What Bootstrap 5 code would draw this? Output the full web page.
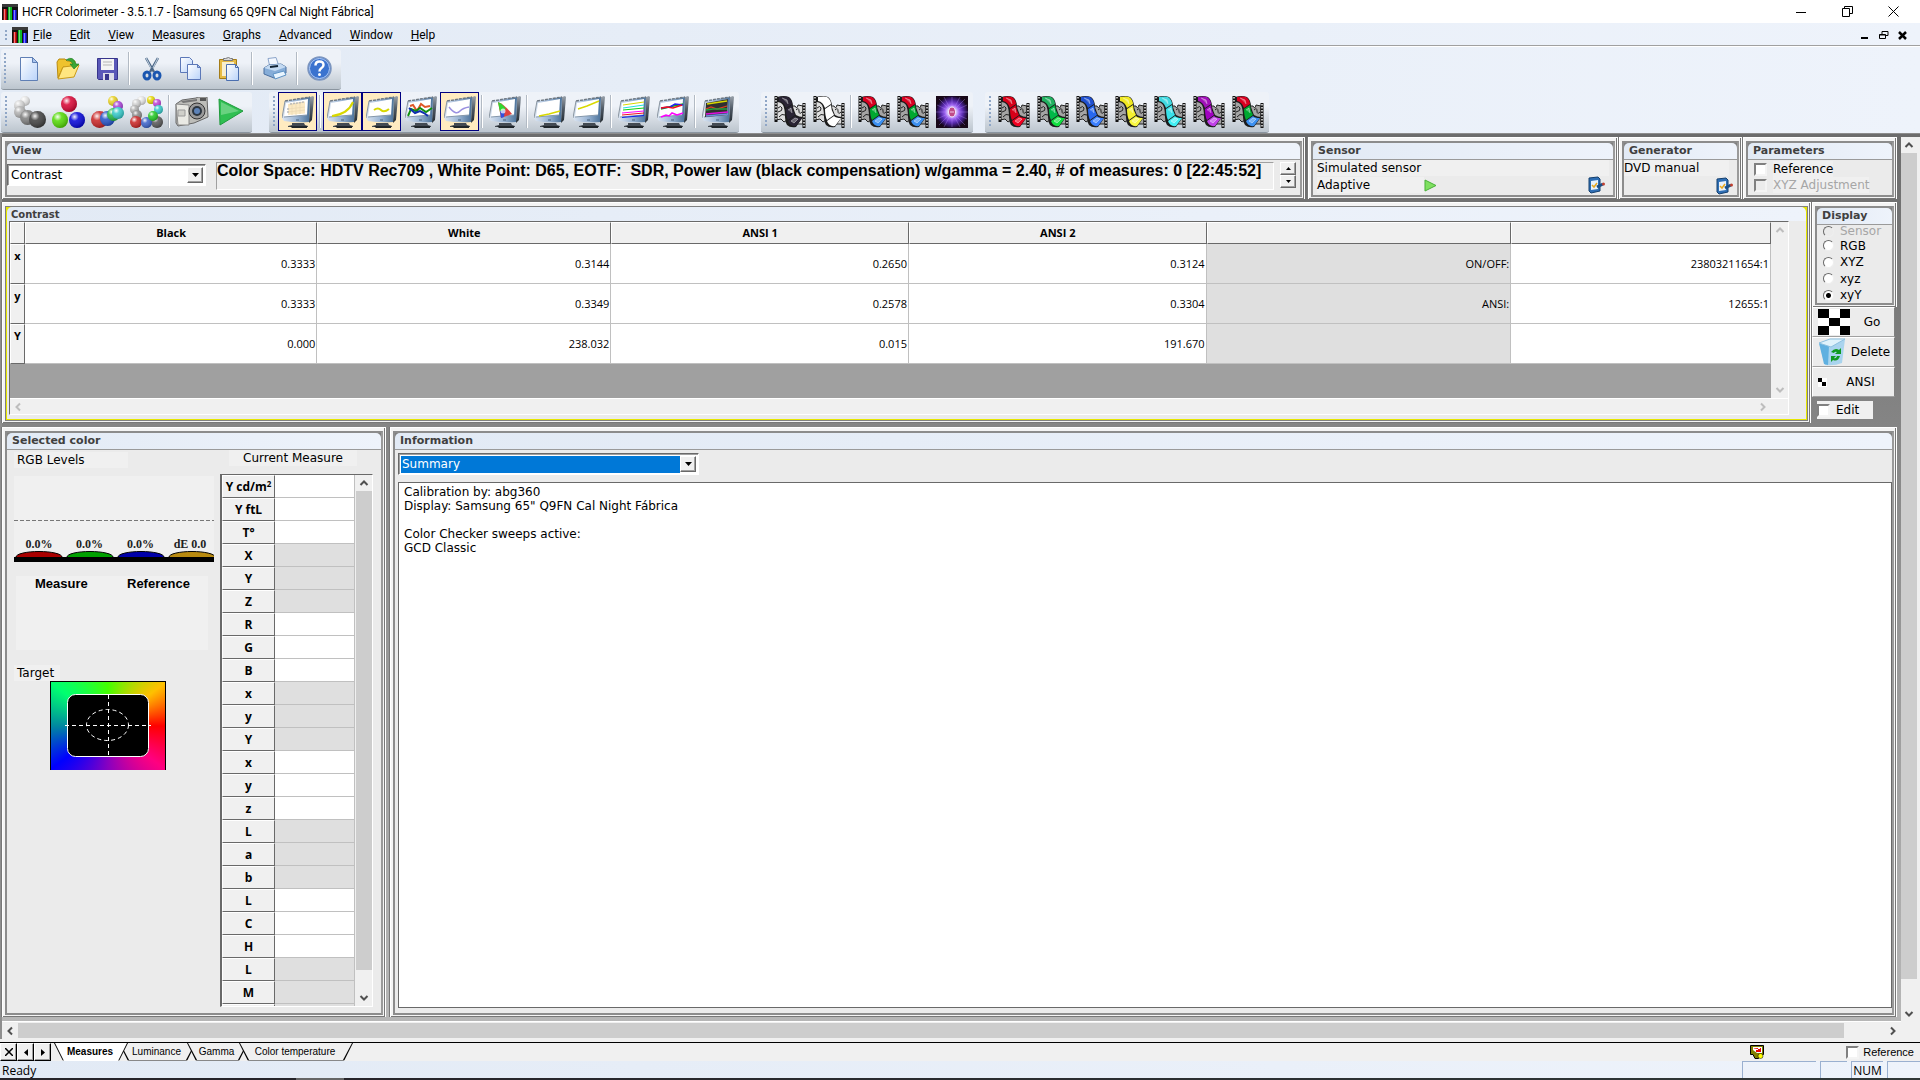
<!DOCTYPE html>
<html lang="en">
<head>
<meta charset="utf-8">
<meta name="viewport" content="width=device-width, initial-scale=1">
<title>HCFR Colorimeter</title>
<link href="https://cdn.jsdelivr.net/npm/bootstrap@5.3.0/dist/css/bootstrap.min.css" rel="stylesheet">
<style>
:root{--wide:"DejaVu Sans",sans-serif;--ui:"Open Sans","Noto Sans",sans-serif;--band:linear-gradient(90deg,#e2eaf5,#eef3fb)}
body{font-family:var(--ui);font-size:12px;line-height:16px;color:#000;overflow:hidden;background:#f0f0f0}
button,input,select{font:inherit;color:inherit;border-radius:0}
svg{display:block;flex:none}
.winbar{height:23px;background:#fff}
.winbar .caption,.menubar{font-family:Roboto,sans-serif}
.winctl{border:0;background:none;padding:0;width:46px;height:23px;display:flex;align-items:center;justify-content:center}
.menubar{height:23px;padding-top:2px;background:var(--band);border-bottom:1px solid #a0a0a0}
.menubar a{color:#000;text-decoration:none;padding:0 9px;white-space:nowrap}
.menubar a::first-letter{text-decoration:underline}
.mdictl{border:0;background:none;padding:0;width:19px;height:20px;display:flex;align-items:center;justify-content:center}
.grip{width:2px;background:repeating-linear-gradient(#8fa6c6 0 2px,transparent 2px 4px)}
.toolarea{background:var(--band);padding:2px 1px 0;border-top:1px solid #fff;border-bottom:1px solid #8c8c8c}
.toolstrip{height:41px;border-radius:3px;background:linear-gradient(#eef2f8 35%,#bcc5ce);border-bottom:1px solid #8a949e;padding:0 2px 1px 4px}
.toolstrip .grip{height:32px;margin-right:3px}
.tbtn{width:39px;height:39px;padding:0;border:1px solid transparent;background:none;display:flex;align-items:center;justify-content:center}
.tbtn.is-on{background:#ffebc0;border-color:#000080}
.tsep{width:6px;height:33px;border-left:2px solid transparent;background:linear-gradient(90deg,#b2bac4 1px,#fff 1px 2px,transparent 2px)}
.workarea{background:linear-gradient(#6c6c6c,#b8b8b8);border-left:2px solid #8f8f8f;padding-top:3px;min-height:0}
.pane{border:1px solid #fff;border-width:1px 1px 0 1px;background:#f4f4f4;padding:3px 2px 2px;box-shadow:inset -1px -1px 0 #777,-1px 0 0 #777;min-width:0}
.pane-in{border:2px solid #8c8c8c;border-right-color:#9a9a9a;background:#808080}
.pane-top{height:17px;line-height:16px;background:var(--band);border-bottom:1px solid #9a9a9a;border-radius:5px 5px 0 0;padding-left:5px;font-family:var(--wide);font-weight:bold;font-size:11px;color:#404040}
.pane-body{background:#ebebeb;font-family:var(--wide);min-height:0}
.tint{background:#f0f0f0}
.row-a{height:62px;gap:1px;margin-bottom:3px}
.row-b{height:221px;margin-bottom:4px}
.combo{border:1px solid;border-color:#696969 #fff #fff #696969;box-shadow:inset 1px 1px 0 #a0a0a0;background:#fff;padding:2px;height:22px}
.combo select{appearance:none;border:0;background:#fff;padding:0 1px;outline:0;height:17px;line-height:17px;flex:1;min-width:0;font-size:12px}
.combo .drop{width:16px;pointer-events:none}
.raised{border:1px solid;border-color:#fff #696969 #696969 #fff;box-shadow:inset -1px -1px 0 #a0a0a0;background:#f0f0f0;display:flex;align-items:center;justify-content:center;padding:0}
.statusline{border:1px solid;border-color:#a0a0a0 #fff #fff #a0a0a0;background:#efefef;height:28px;margin:0 6px 0 10px;font-family:"Liberation Sans",sans-serif;font-weight:bold;font-size:16px;line-height:16px;white-space:nowrap;overflow:hidden}
.tick{appearance:none;width:13px;height:13px;margin:0;border:2px solid;border-color:#808080 #f4f4f4 #f4f4f4 #808080;background:#fff;flex:none}
.tick:disabled{background:#ececec}
.opt{display:flex;align-items:center;gap:6px}
.dot{appearance:none;width:11px;height:11px;margin:0;border:1px solid;border-color:#696969 #eee #eee #696969;border-radius:50%;background:#fff;flex:none}
.dot:checked{background:radial-gradient(circle,#000 2px,#fff 3px)}
.dot:disabled{background:#ebebeb}
.dim{color:#a6a6a6}
.iconbtn{border:0;background:none;padding:0}
.gridbox{border:1px solid;border-color:#696969 #fff #fff #696969;background:#a0a0a0}
.sheet{width:100%;table-layout:fixed;border-collapse:separate;border-spacing:0;font-family:var(--ui);font-size:11px}
.sheet th{background:#f0f0f0;border:1px solid;border-color:#fff #696969 #696969 #fff;text-align:center;font-weight:bold;padding:0;line-height:16px}
.sheet td{background:#fff;border:solid #c0c0c0;border-width:0 1px 1px 0;text-align:right;padding:0 1px}
.sheet td.off{background:#dfdfdf}
.contrast thead th{height:22px}
.contrast tbody tr{height:40px}
.contrast tbody th{vertical-align:top;padding-top:3px}
.contrast .corner{width:15px}
.levels-tbl th{width:53px;height:23px;font-size:12px;line-height:14px}
.levels-tbl sup{font-size:8px;line-height:1}
.vbar{width:17px;background:#f0f0f0;display:flex;flex-direction:column;align-items:center;flex:none}
.vbar .knob{width:16px;background:#cdcdcd}
.hbar{height:16px;background:#f0f0f0;display:flex;align-items:center;border-top:1px solid #fff}
.hbar .knob{height:15px;background:#cdcdcd}
.arr{width:16px;height:16px;border:0;background:none;padding:0;display:flex;align-items:center;justify-content:center;flex:none}
.selring{border:1px solid #808080;background:#e6e600;padding:0 1px 1px}
.selring .pane-top{height:14px;line-height:15px;font-size:10px;border:0;padding-left:4px}
.sidecol{width:85px;margin-left:1px}
.side-act{height:30px;border:1px solid;border-color:#fff #808080 #a0a0a0 #fff;background:#ececec;font-family:var(--wide);font-size:12px;padding:0 0 0 5px;margin-right:2px;display:flex;align-items:center}
.selpane{width:384px}
.dial{font-family:"Liberation Serif",serif;font-weight:bold;font-size:12px;line-height:14px;color:#222}
.dial-box{height:86px;width:200px}
.swatches{width:192px;height:74px;margin:14px 0 0 2px;padding-left:19px;font-family:"Liberation Sans",sans-serif;font-weight:bold;font-size:13px}
.wheel{width:116px;height:89px;margin-left:36px;border:solid #000;border-width:1px 1px 0 1px;background:conic-gradient(#44ff00,#ffc000 53deg,#ff0000 90deg,#ff0080 127deg,#8800c0 180deg,#0000ff 233deg,#0088a0 270deg,#00ff70 307deg,#44ff00)}
.notes{border:1px solid #696969;background:#fff;padding:2px 5px;margin-top:7px;font-size:12px;line-height:14px}
.combo.info-pick{width:301px}
.info-pick select{background:#0078d7;color:#fff}
.tabline{height:19px;border-top:1px solid #000;background:#f0f0f0}
.tabnav{width:17px;height:18px;border:1px solid;border-color:#fff #000 #000 #fff}
.sheet-tab{position:relative;border:0;padding:0 2px 0 0;height:18px;margin-right:-9px;text-align:center;white-space:nowrap;background:linear-gradient(#000 17px,#888 17px);clip-path:polygon(0 0,100% 0,calc(100% - 9px) 100%,9px 100%);font-family:"Liberation Sans",sans-serif;font-size:10px;z-index:0}
.sheet-tab::before{content:"";position:absolute;inset:0 1px 1px;background:#f0f0f0;clip-path:polygon(0 0,100% 0,calc(100% - 9px) 100%,9px 100%);z-index:-1}
.sheet-tab.is-on{z-index:1;font-weight:bold}
.sheet-tab.is-on::before{background:#fff;bottom:0}
.readybar{height:17px;background:var(--band);line-height:20px}
.readybar .cell{border:solid #9ab0d0;border-width:1px 0 0 1px;height:17px;line-height:18px}
.shelf{height:2px;background:linear-gradient(90deg,#26242a 296px,#666 296px 344px,#26242a 344px,#303838)}
</style>
</head>
<body class="vh-100 d-flex flex-column">

<svg width="0" height="0" class="position-absolute" aria-hidden="true">
<defs>
<linearGradient id="gBez" x1="0" y1="0" x2="1" y2="0"><stop offset="0" stop-color="#dde6f2"/><stop offset=".5" stop-color="#9db7d6"/><stop offset="1" stop-color="#4a7199"/></linearGradient>
<linearGradient id="gSide" x1="0" y1="0" x2="0" y2="1"><stop offset="0" stop-color="#9aa2ab"/><stop offset=".5" stop-color="#4c5661"/><stop offset="1" stop-color="#22292f"/></linearGradient>
<radialGradient id="gShine" cx=".35" cy=".3" r=".75"><stop offset="0" stop-color="#fff" stop-opacity=".95"/><stop offset=".35" stop-color="#fff" stop-opacity=".15"/><stop offset="1" stop-color="#000" stop-opacity=".28"/></radialGradient>
<linearGradient id="gPage" x1="0" y1="0" x2="1" y2="1"><stop offset="0" stop-color="#fff"/><stop offset="1" stop-color="#b9d3fa"/></linearGradient>
<symbol id="logo" viewBox="0 0 16 16"><path fill="#111" d="M0 0h16v16H0z"/><path fill="#555" d="M0 0h16v3H0z" opacity=".6"/><path fill="#e01010" d="M1.500 5h3v11h-3z"/><path fill="#10b828" d="M6 3h4v13H6z"/><path fill="#1c1cf0" d="M11 6h3.500v10H11z"/><path fill="#fff" opacity=".45" d="M2 5h1v11H2zM7 3h1v13H7zM12 6h1v10h-1z"/></symbol>
<symbol id="mon" viewBox="0 0 32 32"><path fill="url(#gSide)" d="M28 1l3-1 1 1-2 23-3 3z"/><path fill="url(#gBez)" d="M3 5L28 1l-1 25q-13 1-25-1l-2-3z"/><path d="M3 5L28 1" stroke="#6d7781" stroke-width="1.500" stroke-dasharray="3 1"/><path d="M3 5L0 22" stroke="#8a95a0"/><path fill="#fff" d="M4 7l22-4-1 16-23 2z"/><path d="M2 21l23-2" stroke="#8497ab"/><path d="M14 24h3" stroke="#49627c"/><path fill="#434a52" d="M10 27h12l1 2 3 1v1H6v-1l4-1z"/><path fill="#20262b" d="M8 30h17v2H10z"/></symbol>
<symbol id="film" viewBox="0 0 32 32"><path fill="var(--bg,#a4a4a4)" stroke="#222" d="M2 2v22l5-1 3 3 3-2V8zM17 10h4q2 4 3-1l5 1v18h-8l-4-3z"/><path d="M2 0v26M30 7v25" stroke="#111" stroke-width="3"/><path d="M2 1v24M30 8v24" stroke="#eee" stroke-width="1.500" stroke-dasharray="1.500 1.500"/><path d="M4 12q3-3 4 0t-4 4m1 5q3-4 6-2M22 14q3-3 3 1t3 1" fill="none" stroke="#222"/><path d="M3 1q7-2 12 0 4 3 4 10 2 6 3 8 3 2 7 2l-7 10q-6 1-9-2-2-3-2-8 0-8-2-12-2-3-6-3z" fill="#1c1c1c"/><path fill="var(--a)" d="M5 1q6-1 9 0 4 3 4 7l-6 4Q10 6 5 5z"/><path fill="var(--b)" d="M12 13l6-4q0 5 3 10l-7 5q-2-4-2-11z"/><path fill="var(--c)" d="M14 25l7-5q2 2 7 2l-6 8q-6 1-8-5z"/><path d="M8 2l5 2 1 4M14 14l3-2 1 5M17 25l4-3 3 1-4 4z" stroke="#fff" stroke-opacity=".4" fill="#fff" fill-opacity=".3"/></symbol>
<symbol id="ball" viewBox="0 0 10 10"><circle cx="5" cy="5" r="5" fill="currentColor"/><circle cx="5" cy="5" r="5" fill="url(#gShine)"/></symbol>
<symbol id="props" viewBox="0 0 18 18"><path fill="#2f6fb5" stroke="#15406f" d="M2 2l9-1 2 2v12l-9 2-2-2z"/><path fill="#e8f2fc" d="M4 5l7-1v9l-7 1z"/><path d="M5 9l2 2 3-4" stroke="#e8a820" fill="none" stroke-width="1.500"/><path d="M10 11l6-3" stroke="#1b4f87" stroke-width="3"/><circle cx="16.500" cy="8" r="1.500" fill="#c04030"/></symbol>
<symbol id="up" viewBox="0 0 10 10"><path d="M1.500 7L5 3.500 8.500 7" fill="none" stroke="currentColor" stroke-width="2"/></symbol>
<symbol id="dn" viewBox="0 0 10 10"><path d="M1.500 3L5 6.500 8.500 3" fill="none" stroke="currentColor" stroke-width="2"/></symbol>
<symbol id="lf" viewBox="0 0 10 10"><path d="M7 1.500L3.500 5 7 8.500" fill="none" stroke="currentColor" stroke-width="2"/></symbol>
<symbol id="rt" viewBox="0 0 10 10"><path d="M3 1.500L6.500 5 3 8.500" fill="none" stroke="currentColor" stroke-width="2"/></symbol>
</defs>
</svg>

<header>
  <div class="winbar d-flex align-items-center" style="padding-left:2px">
    <svg width="16" height="16" class="me-1"><use href="#logo"/></svg>
    <span class="caption">HCFR Colorimeter - 3.5.1.7 - [Samsung 65 Q9FN Cal Night Fábrica]</span>
    <div class="ms-auto d-flex pe-1">
      <button class="winctl" aria-label="Minimize"><svg width="10" height="10"><path d="M0 5.500h10" stroke="#000"/></svg></button>
      <button class="winctl" aria-label="Restore"><svg width="11" height="11" fill="none" stroke="#000"><path d="M.5 2.500h7v8h-7zM2.500 2.500v-2h8v7h-3"/></svg></button>
      <button class="winctl" aria-label="Close"><svg width="11" height="11" stroke="#000"><path d="M.5.5l10 10M10.500.5l-10 10"/></svg></button>
    </div>
  </div>
  <nav class="menubar d-flex align-items-center">
    <span class="grip" style="height:11px;margin:0 5px"></span>
    <svg width="16" height="16" style="margin-right:-4px"><use href="#logo"/></svg>
    <a href="#">File</a><a href="#">Edit</a><a href="#">View</a><a href="#">Measures</a><a href="#">Graphs</a><a href="#">Advanced</a><a href="#">Window</a><a href="#">Help</a>
    <div class="ms-auto d-flex pe-2">
      <button class="mdictl" aria-label="Minimize document"><svg width="9" height="9"><path d="M1 7h7" stroke="#000" stroke-width="2"/></svg></button>
      <button class="mdictl" aria-label="Restore document"><svg width="10" height="10" fill="none" stroke="#000"><path d="M.5 4.500h6v4h-6zM.5 5h6M3 4V1.500h6v4H7M3 1.500h6"/></svg></button>
      <button class="mdictl" aria-label="Close document"><svg width="9" height="9" stroke="#000" stroke-width="2.500"><path d="M1 1l7 7M8 1L1 8"/></svg></button>
    </div>
  </nav>
</header>

<div class="toolarea">
  <div class="d-flex" style="margin-bottom:2px">
    <div class="toolstrip d-flex align-items-center" role="toolbar" aria-label="Standard" style="padding-left:3px">
      <span class="grip"></span>
      <button class="tbtn" aria-label="New"><svg width="24" height="24"><path d="M3.500.5h12l5 5v18h-17z" fill="url(#gPage)" stroke="#5f7fb5"/><path d="M15.500.5v5h5z" fill="#a9c4ee" stroke="#5f7fb5"/></svg></button>
      <button class="tbtn" aria-label="Open"><svg width="26" height="24"><path d="M2 5l2-3h6l2 2h8v6H8L3 21z" fill="#eec22e" stroke="#b98a10"/><path d="M3 22L8 10l16-2-5 12z" fill="#ffe680" stroke="#c99a18"/><path d="M11 3q7-5 10 4h3l-5 5-4-5h3q-2-4-7-4z" fill="#3aa636" stroke="#1d7a22" stroke-width=".6"/></svg></button>
      <button class="tbtn" aria-label="Save"><svg width="24" height="24"><path d="M2.500 1.500h20v21h-19l-1-1z" fill="#5a58b8" stroke="#37358c"/><path fill="#f4f4f4" d="M6 2h13v11H6z"/><path d="M8 5h9M8 8h9" stroke="#b5b5b5"/><path fill="#dcdce8" d="M8 16h11v7H8z"/><path fill="#37358c" d="M10 17h4v6h-4z"/></svg></button>
      <span class="tsep"></span>
      <button class="tbtn" aria-label="Cut"><svg width="20" height="24"><path d="M4 1l8 14M16 1L8 15" stroke="#4b6787" stroke-width="2.500"/><path d="M4 1l5 10M16 1l-5 10" stroke="#c9d6e3"/><g fill="none" stroke="#1a56b0" stroke-width="3"><ellipse cx="5" cy="18.500" rx="3" ry="3.500"/><ellipse cx="15" cy="18.500" rx="3" ry="3.500"/></g></svg></button>
      <button class="tbtn" aria-label="Copy"><svg width="24" height="24" stroke="#5c78b8" fill="url(#gPage)"><path d="M1.500.5h9l3 3v12h-12z"/><path d="M8.500 7.500h10l3 3v12h-13z"/><path d="M18.500 7.500v3h3z" fill="#a9c4ee"/></svg></button>
      <button class="tbtn" aria-label="Paste"><svg width="24" height="24"><path d="M1.500 2.500h17v19h-17z" fill="#e6bb45" stroke="#a47c18"/><path d="M4 5h12v14H4z" fill="#f8efcf"/><path d="M5.500 3.500h9v-2h-2l-2-1-3 1h-2z" fill="#d8d8d8" stroke="#777"/><path d="M8.500 7.500h9l3 3v13h-12z" fill="url(#gPage)" stroke="#4b6fb0"/><path d="M17.500 7.500v3h3" fill="none" stroke="#4b6fb0"/></svg></button>
      <span class="tsep"></span>
      <button class="tbtn" aria-label="Print"><svg width="24" height="24"><path d="M5 1.500l8-1 3 9-9 1z" fill="#f4f8ff" stroke="#8ba4c9"/><path d="M1 11l5-3 12-1 5 3v6l-12 5-10-4z" fill="#86add8" stroke="#4a6f9f"/><path d="M1 11l11 3 11-4-5-3-12 1z" fill="#c4daf2"/><path d="M7 10l8-1" stroke="#123" stroke-width="2"/><path d="M10 17l11-3 2 4-11 4z" fill="#e9f5ff" stroke="#5d93c5"/></svg></button>
      <span class="tsep"></span>
      <button class="tbtn" aria-label="Help"><svg width="25" height="25"><circle cx="12.500" cy="12.500" r="11.500" fill="#3b73cf" stroke="#7d96bf" stroke-width="1.500"/><circle cx="12.500" cy="12.500" r="10" fill="none" stroke="#b9d0f4"/><path d="M8.500 9.500q0-4 4-4t4 3.500q0 2-2.500 3.500-1.500 1-1.500 3" fill="none" stroke="#fff" stroke-width="2.500"/><circle cx="12.500" cy="18.500" r="1.500" fill="#fff"/></svg></button>
    </div>
  </div>
  <div class="d-flex">
    <div class="toolstrip d-flex align-items-center" role="toolbar" aria-label="Measures" style="width:251px">
      <span class="grip"></span>
      <button class="tbtn" aria-label="Gray scale"><svg width="33" height="32"><use href="#ball" x="7" y="0" width="10" height="10" color="#e4e4e4"/><use href="#ball" x="1" y="4" width="11" height="11" color="#d4d4d4"/><use href="#ball" x="1" y="10" width="12" height="12" color="#b0b0b0"/><use href="#ball" x="7" y="14" width="15" height="15" color="#7c7c7c"/><use href="#ball" x="16" y="15" width="17" height="17" color="#3c3c3c"/></svg></button>
      <button class="tbtn" aria-label="Primaries"><svg width="33" height="32"><use href="#ball" x="9" y="0" width="16" height="16" color="#d80030"/><use href="#ball" x="0" y="16" width="16" height="16" color="#50d800"/><use href="#ball" x="17" y="16" width="16" height="16" color="#0000d8"/></svg></button>
      <button class="tbtn" aria-label="Primaries and secondaries"><svg width="33" height="32"><use href="#ball" x="17" y="0" width="10" height="10" color="#e8d020"/><use href="#ball" x="22" y="5" width="10" height="10" color="#a840d8"/><use href="#ball" x="0" y="15" width="17" height="17" color="#c82020"/><use href="#ball" x="9" y="15" width="15" height="15" color="#2050c8"/><use href="#ball" x="16" y="12" width="13" height="13" color="#20b840"/><use href="#ball" x="21" y="11" width="12" height="12" color="#30c8c8"/></svg></button>
      <button class="tbtn" aria-label="Full sweep"><svg width="33" height="32"><use href="#ball" x="7" y="0" width="9" height="9" color="#e4e4e4"/><use href="#ball" x="17" y="0" width="8" height="8" color="#e8d800"/><use href="#ball" x="23" y="3" width="8" height="8" color="#c040d8"/><use href="#ball" x="2" y="3" width="9" height="9" color="#d0d0d0"/><use href="#ball" x="0" y="9" width="9" height="9" color="#b0b0b0"/><use href="#ball" x="24" y="9" width="9" height="9" color="#30c8c8"/><use href="#ball" x="2" y="14" width="10" height="10" color="#888"/><use href="#ball" x="0" y="20" width="12" height="12" color="#c82020"/><use href="#ball" x="21" y="20" width="12" height="12" color="#555"/><use href="#ball" x="11" y="21" width="11" height="11" color="#3860c8"/><use href="#ball" x="18" y="15" width="10" height="10" color="#20c820"/></svg></button>
      <span class="tsep"></span>
      <button class="tbtn" aria-label="Camera"><svg width="34" height="30"><path d="M1 7l6-4 14-2 2-1h9l1 20-14 6L3 29 1 26z" fill="#bdbdb9" stroke="#666"/><path d="M1 7l13 1v20L3 28z" fill="#e9e9e4" stroke="#888"/><path d="M6 4l16-2v2L8 6z" fill="#777"/><path d="M3 13h7v6H3z" fill="#cfcfca" stroke="#999"/><circle cx="22" cy="14" r="8" fill="#999" stroke="#333"/><circle cx="22" cy="14" r="5" fill="#2c3640"/><circle cx="22" cy="14" r="3" fill="#5d83b8"/><path d="M25 1h6v3h-6z" fill="#555"/></svg></button>
      <button class="tbtn" aria-label="Continuous measures"><svg width="26" height="28"><path d="M1 1l24 12L2 27z" fill="#2fbf52" stroke="#1f9a3c"/><path d="M3 4l18 9-18 4z" fill="#8fe0a0" opacity=".6"/></svg></button>
    </div>
    <div class="toolstrip d-flex align-items-center" role="toolbar" aria-label="Graphs" style="margin-left:17px">
      <span class="grip"></span>
      <button class="tbtn is-on" aria-label="Measures table"><svg width="32" height="32"><use href="#mon"/><path d="M6 8l17-2.500v12L6 19z" fill="#fbe9c4"/><path d="M7 9l15-3M6 13l17-2M6 16l17-2M10 8v11M14 8v11M18 7v11" stroke="#ecd9b4" stroke-width=".8"/><path d="M8 8l14-2M6 12v6" stroke="#bbb" stroke-width="1.500" stroke-dasharray="2 1"/></svg></button>
      <span class="tsep"></span>
      <button class="tbtn is-on" aria-label="Luminance"><svg width="32" height="32"><use href="#mon"/><path d="M5 20q16-2 21-14" fill="none" stroke="#d8d800" stroke-width="2"/></svg></button>
      <button class="tbtn is-on" aria-label="Gamma"><svg width="32" height="32"><use href="#mon"/><path d="M8 14q4-3 7 0t8-1" fill="none" stroke="#d8d800" stroke-width="2"/></svg></button>
      <button class="tbtn" aria-label="RGB levels"><svg width="32" height="32"><use href="#mon"/><path d="M5 10l3-1 4 6 4-7 4 3 5-1" fill="none" stroke="#e05828" stroke-width="2"/><path d="M3 20l3-7 5 2 4-3 6 4 6-4" fill="none" stroke="#109010" stroke-width="2"/><path d="M4 12l6 5 5-2 4 2 4 3" fill="none" stroke="#1030b0" stroke-width="2"/></svg></button>
      <button class="tbtn is-on" aria-label="Color temperature"><svg width="32" height="32"><use href="#mon"/><path d="M5 11q7 9 11 4 3-3 9-4" fill="none" stroke="#9a90e0" stroke-width="1.500"/></svg></button>
      <span class="tsep"></span>
      <button class="tbtn" aria-label="CIE chart"><svg width="32" height="32"><use href="#mon"/><path d="M9 6q6 2 14 12l-11 4z" fill="#e04040"/><path d="M9 6q5 2 8 7l-6 3z" fill="#30d830"/><path d="M11 15l5-1-1 7-3 1z" fill="#3050e0"/><circle cx="14" cy="15" r="2.500" fill="#fff" opacity=".7"/></svg></button>
      <span class="tsep"></span>
      <button class="tbtn" aria-label="Near black"><svg width="32" height="32"><use href="#mon"/><path d="M5 20l10-2 11-3" fill="none" stroke="#d8d800" stroke-width="1.500"/></svg></button>
      <button class="tbtn" aria-label="Near white"><svg width="32" height="32"><use href="#mon"/><path d="M5 13l9-3 12-5" fill="none" stroke="#d8d800" stroke-width="1.500"/></svg></button>
      <span class="tsep"></span>
      <button class="tbtn" aria-label="Saturation luminance"><svg width="32" height="32"><use href="#mon"/><g fill="none"><path d="M5 9l21-3" stroke="#d8d800"/><path d="M5 12l21-3" stroke="#20e0e0"/><path d="M5 14l21-2" stroke="#10d010"/><path d="M4 17l22-2" stroke="#f0f"/><path d="M4 19l22-2" stroke="#f01020"/><path d="M4 21.500l22-2" stroke="#1020f0"/></g></svg></button>
      <button class="tbtn" aria-label="Saturation shift"><svg width="32" height="32"><use href="#mon"/><g fill="none" stroke-width="1.500"><path d="M4 13l8-2 14-3" stroke="#10b010"/><path d="M4 12l9-1 5-3 8 1" stroke="#2020f0"/><path d="M4 12l6-1 6 1 9-3" stroke="#f01020"/><path d="M4 21l5-2 3 1 3-3 5 2 6-2" stroke="#f0f"/></g></svg></button>
      <span class="tsep"></span>
      <button class="tbtn" aria-label="Combined graphs"><svg width="32" height="32"><use href="#mon"/><path fill="#303030" d="M4 7l22-4-1 16-22 2z"/><g fill="none" stroke-width="1.300"><path d="M5 8l20-3" stroke="#d8d800"/><path d="M4 13l5-2 6 2 10-3" stroke="#e04020"/><path d="M4 14l7-1 14 0" stroke="#20a040"/><path d="M4 18l22-2" stroke="#e010e0"/><path d="M4 20l22-2" stroke="#7090e0"/></g></svg></button>
    </div>
    <div class="toolstrip d-flex align-items-center" role="toolbar" aria-label="Patterns" style="margin-left:22px">
      <span class="grip"></span>
      <button class="tbtn" aria-label="Black film" style="--bg:#ddd;--a:#2a2434;--b:#2a2434;--c:#2a2434"><svg width="32" height="32"><use href="#film"/></svg></button>
      <button class="tbtn" aria-label="White film" style="--bg:#ddd;--a:#fff;--b:#fff;--c:#fff"><svg width="32" height="32"><use href="#film"/></svg></button>
      <span class="tsep"></span>
      <button class="tbtn" aria-label="Color film 1" style="--a:#d80020;--b:#00a830;--c:#3c90f0"><svg width="32" height="32"><use href="#film"/></svg></button>
      <button class="tbtn" aria-label="Color film 2" style="--a:#d80020;--b:#00a830;--c:#3c90f0"><svg width="32" height="32"><use href="#film"/></svg></button>
      <button class="tbtn" aria-label="Burst"><svg width="32" height="32"><defs><radialGradient id="gB"><stop offset="0" stop-color="#c04080"/><stop offset=".12" stop-color="#d060a0"/><stop offset=".25" stop-color="#e8d8ff"/><stop offset=".45" stop-color="#9a60f0"/><stop offset=".7" stop-color="#5428a8"/><stop offset="1" stop-color="#180828"/></radialGradient></defs><path fill="#180818" d="M0 0h32v32H0z"/><circle cx="16" cy="16" r="16" fill="url(#gB)"/><path d="M3 3l26 26M29 3L3 29M16 1v30M0 16h32M8 1l16 30M24 1L8 31M1 9l30 14M1 23L31 9" stroke="#b890ff" stroke-width=".7" opacity=".5"/><ellipse cx="16" cy="16" rx="3.500" ry="5" fill="#c04a88" stroke="#f4e8ff"/><path d="M14 16h4" stroke="#f4c8e8"/></svg></button>
    </div>
    <div class="toolstrip d-flex align-items-center" role="toolbar" aria-label="Saturations" style="margin-left:12px">
      <span class="grip"></span>
      <button class="tbtn" aria-label="Red" style="--a:#d80018;--b:#d80018;--c:#f00020"><svg width="32" height="32"><use href="#film"/></svg></button>
      <button class="tbtn" aria-label="Green" style="--a:#20b060;--b:#00b848;--c:#10e040"><svg width="32" height="32"><use href="#film"/></svg></button>
      <button class="tbtn" aria-label="Blue" style="--a:#2050d0;--b:#2868f0;--c:#3c80ff"><svg width="32" height="32"><use href="#film"/></svg></button>
      <button class="tbtn" aria-label="Yellow" style="--a:#f0e820;--b:#f4f030;--c:#f8f840"><svg width="32" height="32"><use href="#film"/></svg></button>
      <button class="tbtn" aria-label="Cyan" style="--a:#40d8e0;--b:#38e0e8;--c:#40f0f4"><svg width="32" height="32"><use href="#film"/></svg></button>
      <button class="tbtn" aria-label="Magenta" style="--a:#a010b8;--b:#a000c0;--c:#c040e8"><svg width="32" height="32"><use href="#film"/></svg></button>
      <button class="tbtn" aria-label="All colors" style="--a:#d80020;--b:#00a830;--c:#3c90f0"><svg width="32" height="32"><use href="#film"/></svg></button>
    </div>
  </div>
</div>

<main class="workarea d-flex flex-grow-1">
  <div class="d-flex flex-column flex-grow-1" style="min-width:0">
    <div class="d-flex flex-column flex-grow-1 pe-1" style="min-height:0">
      <div class="row-a d-flex flex-shrink-0">
        <section class="pane d-flex flex-grow-1" style="margin-right:2px">
          <div class="pane-in flex-grow-1 d-flex flex-column" style="min-width:0">
            <div class="pane-top">View</div>
            <div class="pane-body flex-grow-1 d-flex align-items-start" style="padding-top:2px">
              <div class="combo d-flex flex-shrink-0" style="width:199px;margin-top:2px">
                <select aria-label="View"><option>Contrast</option></select>
                <span class="raised drop"><svg width="7" height="4"><path d="M0 0h7L3.500 4z"/></svg></span>
              </div>
              <div class="statusline flex-grow-1">Color Space: HDTV Rec709 , White Point: D65, EOTF:&nbsp; SDR, Power law (black compensation) w/gamma = 2.40, # of measures: 0 [22:45:52]</div>
              <div class="d-flex flex-column me-1">
                <button class="raised" style="width:16px;height:13px" aria-label="Previous"><svg width="5" height="3"><path d="M0 3h5L2.500 0z"/></svg></button>
                <button class="raised" style="width:16px;height:13px" aria-label="Next"><svg width="5" height="3"><path d="M0 0h5L2.500 3z"/></svg></button>
              </div>
            </div>
          </div>
        </section>
        <section class="pane d-flex flex-shrink-0" style="width:310px">
          <div class="pane-in flex-grow-1 d-flex flex-column">
            <div class="pane-top">Sensor</div>
            <div class="pane-body flex-grow-1 px-1">
              <div class="tint">Simulated sensor</div>
              <div class="d-flex align-items-center" style="height:18px"><span class="tint" style="width:107px">Adaptive</span>
                <button class="iconbtn" aria-label="Start"><svg width="13" height="13"><path d="M1 1l11 5.500L1 12z" fill="#7fe060" stroke="#48b038"/></svg></button>
                <button class="iconbtn ms-auto me-1" aria-label="Sensor properties"><svg width="18" height="18"><use href="#props"/></svg></button></div>
            </div>
          </div>
        </section>
        <section class="pane d-flex flex-shrink-0" style="width:123px">
          <div class="pane-in flex-grow-1 d-flex flex-column">
            <div class="pane-top">Generator</div>
            <div class="pane-body flex-grow-1">
              <div class="tint me-2">DVD manual</div>
              <div class="d-flex align-items-center" style="height:20px"><button class="iconbtn ms-auto me-1" aria-label="Generator properties"><svg width="18" height="18"><use href="#props"/></svg></button></div>
            </div>
          </div>
        </section>
        <section class="pane d-flex flex-shrink-0" style="width:154px">
          <div class="pane-in flex-grow-1 d-flex flex-column">
            <div class="pane-top">Parameters</div>
            <div class="pane-body flex-grow-1" style="padding:1px 0 0 6px">
              <label class="opt"><input type="checkbox" class="tick"><span class="tint">Reference</span></label>
              <label class="opt dim"><input type="checkbox" class="tick" disabled><span class="tint text-nowrap">XYZ Adjustment</span></label>
            </div>
          </div>
        </section>
      </div>

      <div class="row-b d-flex flex-shrink-0">
        <section class="pane d-flex flex-grow-1">
          <div class="pane-in selring flex-grow-1 d-flex flex-column">
            <div class="pane-top">Contrast</div>
            <div class="pane-body flex-grow-1 d-flex" style="padding:0 17px 4px 2px">
              <div class="gridbox flex-grow-1 d-flex flex-column">
                <div class="d-flex flex-grow-1">
                  <div class="flex-grow-1">
                    <table class="sheet contrast">
                      <colgroup><col class="corner"><col style="width:16.6%"><col style="width:16.7%"><col style="width:16.9%"><col style="width:16.9%"><col style="width:17.3%"><col></colgroup>
                      <thead><tr><th></th><th>Black</th><th>White</th><th>ANSI 1</th><th>ANSI 2</th><th></th><th></th></tr></thead>
                      <tbody>
                        <tr><th>x</th><td>0.3333</td><td>0.3144</td><td>0.2650</td><td>0.3124</td><td class="off">ON/OFF:</td><td>23803211654:1</td></tr>
                        <tr><th>y</th><td>0.3333</td><td>0.3349</td><td>0.2578</td><td>0.3304</td><td class="off">ANSI:</td><td>12655:1</td></tr>
                        <tr><th>Y</th><td>0.000</td><td>238.032</td><td>0.015</td><td>191.670</td><td class="off"></td><td></td></tr>
                      </tbody>
                    </table>
                  </div>
                  <div class="vbar justify-content-between" style="color:#bdbdbd">
                    <button class="arr" aria-label="Scroll up"><svg width="10" height="10"><use href="#up"/></svg></button>
                    <button class="arr" aria-label="Scroll down"><svg width="10" height="10"><use href="#dn"/></svg></button>
                  </div>
                </div>
                <div class="hbar justify-content-between" style="color:#bdbdbd;padding-right:17px">
                  <button class="arr" aria-label="Scroll left"><svg width="10" height="10"><use href="#lf"/></svg></button>
                  <button class="arr" aria-label="Scroll right"><svg width="10" height="10"><use href="#rt"/></svg></button>
                </div>
              </div>
            </div>
          </div>
        </section>
        <aside class="sidecol d-flex flex-column flex-shrink-0">
          <section class="pane d-flex" style="height:105px">
            <div class="pane-in flex-grow-1 d-flex flex-column">
              <div class="pane-top">Display</div>
              <div class="pane-body flex-grow-1 d-flex flex-column justify-content-between" style="padding-left:6px">
                <label class="opt dim lh-1"><input type="radio" name="disp" class="dot" disabled><span>Sensor</span></label>
                <label class="opt"><input type="radio" name="disp" class="dot"><span>RGB</span></label>
                <label class="opt"><input type="radio" name="disp" class="dot"><span>XYZ</span></label>
                <label class="opt"><input type="radio" name="disp" class="dot"><span>xyz</span></label>
                <label class="opt"><input type="radio" name="disp" class="dot" checked><span>xyY</span></label>
              </div>
            </div>
          </section>
          <button class="side-act"><svg width="32" height="26"><path fill="#fff" d="M0 0h32v26H0z"/><path d="M0 0h11v9H0zM22 0h10v9H22zM11 9h11v8H11zM0 17h11v9H0zM22 17h10v9H22z"/></svg><span class="flex-grow-1">Go</span></button>
          <button class="side-act"><svg width="29" height="28"><path d="M1 5l10 3 16-7-3 24q-7 3-17 2z" fill="#a9d4ee"/><path d="M1 5l10 3-1 19-4-1z" fill="#5fb0e0"/><path d="M1 5l11-4 15 0-14 8z" fill="#dff2fb" stroke="#8cc0e0"/><path d="M13 14q4-5 8-2l2-2v6h-6l2-2q-2-1-3 1zM22 18q-2 6-7 4l-2 2v-6h5l-2 2q2 1 3-2z" fill="#0f9a20"/></svg><span class="flex-grow-1">Delete</span></button>
          <button class="side-act"><svg width="9" height="9"><path fill="#fff" d="M0 0h9v9H0z"/><path d="M0 0h4v4H0zM4 4h4v4H4z"/></svg><span class="flex-grow-1">ANSI</span></button>
          <label class="opt tint mt-1" style="width:56px;height:18px;margin-left:5px;font-family:var(--wide)"><input type="checkbox" class="tick"><span>Edit</span></label>
        </aside>
      </div>

      <div class="d-flex gap-1 flex-grow-1 mb-1" style="min-height:0">
        <section class="pane selpane d-flex flex-shrink-0">
          <div class="pane-in flex-grow-1 d-flex flex-column" style="min-width:0">
            <div class="pane-top">Selected color</div>
            <div class="pane-body flex-grow-1 d-flex overflow-hidden" style="padding:0 7px 6px 7px">
              <div style="width:206px">
                <div class="tint" style="width:114px;margin-top:2px;padding-left:3px">RGB Levels</div>
                <div class="dial dial-box tint mt-2 d-flex flex-column justify-content-end">
                  <div class="mb-auto" style="height:45px;background:repeating-linear-gradient(90deg,#777 0 4px,transparent 4px 6px) bottom/100% 1px no-repeat"></div>
                  <div class="d-flex text-center"><span style="width:50px">0.0%</span><span style="width:51px">0.0%</span><span style="width:51px">0.0%</span><span style="width:48px" class="text-nowrap">dE 0.0</span></div>
                  <svg width="200" height="11"><g stroke="#000"><ellipse cx="25" cy="6" rx="23" ry="5.500" fill="#a80000"/><ellipse cx="76" cy="6" rx="23" ry="5.500" fill="#00a000"/><ellipse cx="127" cy="6" rx="23" ry="5.500" fill="#0000a8"/><ellipse cx="178" cy="6" rx="23" ry="5.500" fill="#b88a10"/></g><path d="M0 6h200v5H0z"/></svg>
                </div>
                <div class="swatches tint d-flex"><span style="width:92px">Measure</span><span>Reference</span></div>
                <div class="tint" style="width:46px;margin-top:15px;padding-left:3px">Target</div>
                <div class="wheel"><svg width="114" height="88" fill="none" stroke="#fff"><rect x="16.500" y="12.500" width="81" height="62" rx="8" fill="#000"/><g stroke-dasharray="4 3"><path d="M14 43.500h86M57.500 13v61"/><ellipse cx="56.500" cy="43" rx="21" ry="15.500"/></g></svg></div>
              </div>
              <div class="d-flex flex-column" style="width:153px">
                <div class="tint text-center" style="width:128px;margin-left:9px">Current Measure</div>
                <div class="gridbox flex-grow-1 d-flex overflow-hidden" style="margin-top:8px;min-height:0;border-left-width:2px">
                  <div class="flex-grow-1">
                    <table class="sheet levels-tbl">
                      <tr><th>Y cd/m<sup>2</sup></th><td></td></tr>
                      <tr><th>Y ftL</th><td></td></tr>
                      <tr><th>T°</th><td></td></tr>
                      <tr><th>X</th><td class="off"></td></tr>
                      <tr><th>Y</th><td class="off"></td></tr>
                      <tr><th>Z</th><td class="off"></td></tr>
                      <tr><th>R</th><td></td></tr>
                      <tr><th>G</th><td></td></tr>
                      <tr><th>B</th><td></td></tr>
                      <tr><th>x</th><td class="off"></td></tr>
                      <tr><th>y</th><td class="off"></td></tr>
                      <tr><th>Y</th><td class="off"></td></tr>
                      <tr><th>x</th><td></td></tr>
                      <tr><th>y</th><td></td></tr>
                      <tr><th>z</th><td></td></tr>
                      <tr><th>L</th><td class="off"></td></tr>
                      <tr><th>a</th><td class="off"></td></tr>
                      <tr><th>b</th><td class="off"></td></tr>
                      <tr><th>L</th><td></td></tr>
                      <tr><th>C</th><td></td></tr>
                      <tr><th>H</th><td></td></tr>
                      <tr><th>L</th><td class="off"></td></tr>
                      <tr><th>M</th><td class="off"></td></tr>
                      <tr><th></th><td class="off"></td></tr>
                    </table>
                  </div>
                  <div class="vbar" style="color:#505050">
                    <button class="arr" aria-label="Scroll up"><svg width="10" height="10"><use href="#up"/></svg></button>
                    <div class="knob" style="flex:480 0 0"></div><div style="flex:20 0 0"></div>
                    <button class="arr" aria-label="Scroll down"><svg width="10" height="10"><use href="#dn"/></svg></button>
                  </div>
                </div>
              </div>
            </div>
          </div>
        </section>
        <section class="pane d-flex flex-grow-1">
          <div class="pane-in flex-grow-1 d-flex flex-column">
            <div class="pane-top">Information</div>
            <div class="pane-body flex-grow-1 d-flex flex-column" style="padding:3px 0 5px 3px">
              <div class="combo info-pick d-flex">
                <select aria-label="Information"><option>Summary</option></select>
                <span class="raised drop"><svg width="7" height="4"><path d="M0 0h7L3.500 4z"/></svg></span>
              </div>
              <div class="notes flex-grow-1">Calibration by: abg360<br>Display: Samsung 65" Q9FN Cal Night Fábrica<br><br>Color Checker sweeps active:<br>GCD Classic</div>
            </div>
          </div>
        </section>
      </div>
    </div>
    <div class="hbar flex-shrink-0" style="height:18px;color:#505050">
      <button class="arr" aria-label="Scroll left"><svg width="10" height="10"><use href="#lf"/></svg></button>
      <div class="knob" style="flex:1825 0 0"></div><div style="flex:41 0 0"></div>
      <button class="arr" aria-label="Scroll right"><svg width="10" height="10"><use href="#rt"/></svg></button>
    </div>
  </div>
  <div class="vbar align-items-start" style="width:19px;padding-bottom:17px;color:#505050">
    <button class="arr" aria-label="Scroll up"><svg width="10" height="10"><use href="#up"/></svg></button>
    <div class="knob" style="flex:827 0 0"></div><div style="flex:27 0 0"></div>
    <button class="arr" aria-label="Scroll down"><svg width="10" height="10"><use href="#dn"/></svg></button>
  </div>
</main>

<footer>
  <div style="height:3px"></div>
  <div class="tabline d-flex align-items-start">
    <button class="tabnav raised" aria-label="Close tab"><svg width="8" height="8" stroke="#000" stroke-width="1.500"><path d="M0 0l8 8M8 0L0 8"/></svg></button>
    <button class="tabnav raised" aria-label="Previous tab"><svg width="4" height="7"><path d="M4 0v7L0 3.500z"/></svg></button>
    <button class="tabnav raised" aria-label="Next tab"><svg width="4" height="7"><path d="M0 0v7l4-3.500z"/></svg></button>
    <div class="d-flex" style="margin-left:3px">
      <button class="sheet-tab is-on" style="width:74px">Measures</button>
      <button class="sheet-tab" style="width:77px">Luminance</button>
      <button class="sheet-tab" style="width:61px">Gamma</button>
      <button class="sheet-tab" style="width:114px">Color temperature</button>
    </div>
    <div class="ms-auto d-flex align-items-center" style="height:18px;padding-right:6px">
      <svg width="15" height="14" style="margin-right:81px"><path d="M.5.5h13v9l-3 1-2 3H5l-2-4H.5z" fill="#808000" stroke="#000"/><path fill="#fff" d="M3 2h9v6H7l-4-3z"/><path fill="#e00" d="M3 3h5v2H6v2h5V3h-1v1z"/><circle cx="10.500" cy="11" r="2.500" fill="#ff0" stroke="#000" stroke-width=".5"/></svg>
      <label class="d-flex align-items-center gap-1" style="font-family:'Liberation Sans',sans-serif;font-size:11px"><input type="checkbox" class="tick"><span>Reference</span></label>
    </div>
  </div>
  <div class="readybar d-flex">
    <span style="padding-left:2px">Ready</span>
    <div class="ms-auto d-flex gap-1"><span class="cell" style="width:74px"></span><span class="cell" style="width:27px"></span><span class="cell text-center" style="width:32px">NUM</span><span class="cell" style="width:33px"></span></div>
  </div>
  <div class="shelf"></div>
</footer>
<script src="https://cdn.jsdelivr.net/npm/bootstrap@5.3.0/dist/js/bootstrap.bundle.min.js"></script>
</body>
</html>
